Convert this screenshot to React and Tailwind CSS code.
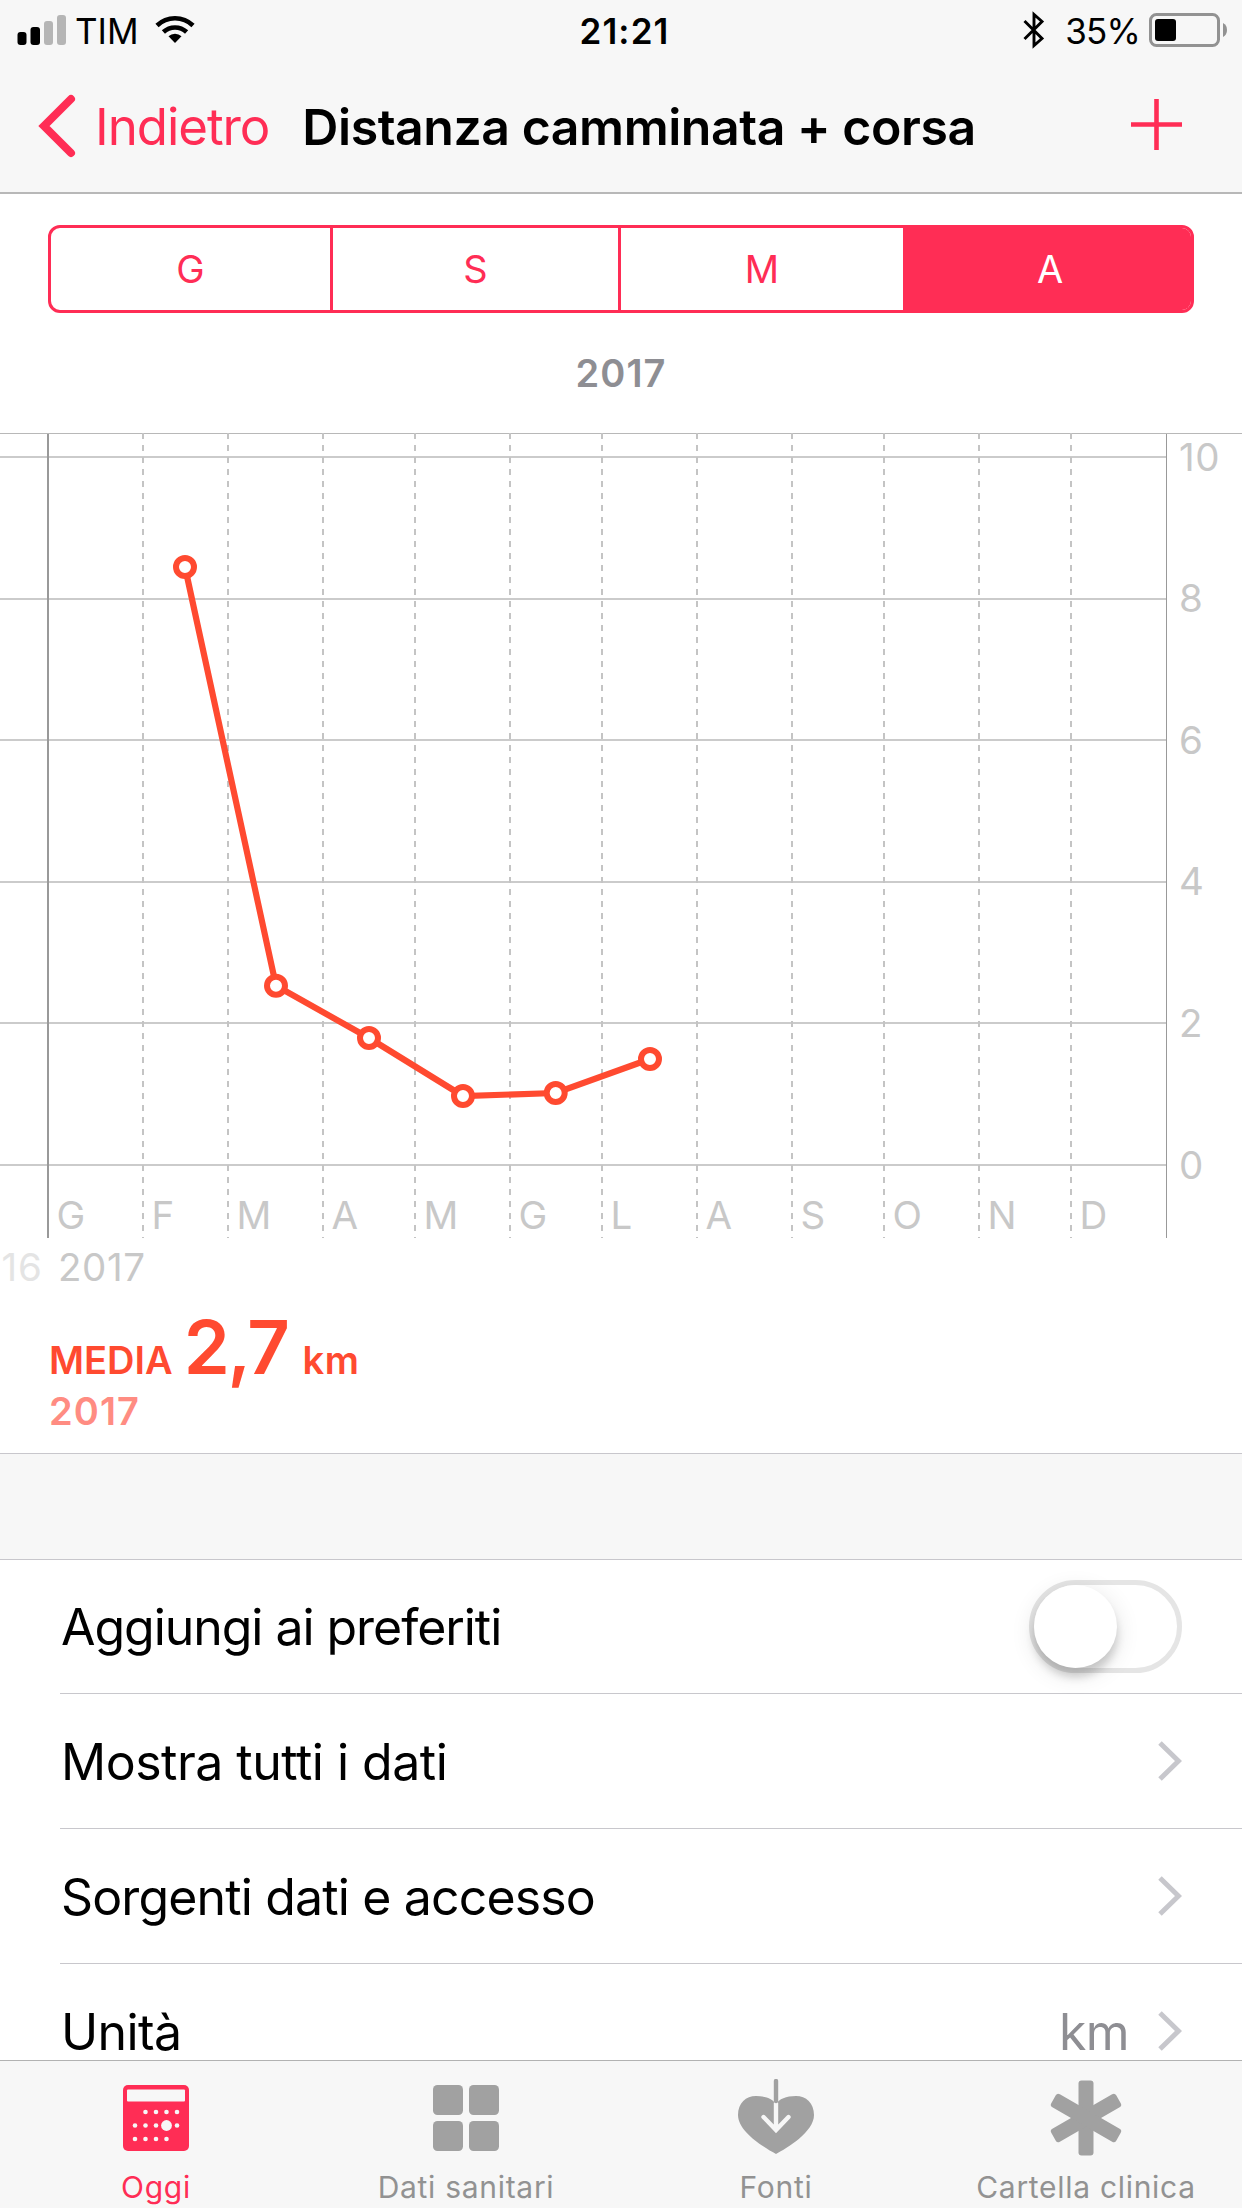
import { Fragment } from 'react'

const PINK = '#ff2d55'
const ORANGE = '#ff4a30'

const RANGES = [
  { label: 'G', style: 'w-[282px] border-r-3 border-[#ff2d55] text-[#ff2d55]' },
  { label: 'S', style: 'w-[288px] border-r-3 border-[#ff2d55] text-[#ff2d55]' },
  { label: 'M', style: 'w-[285px] border-r-3 border-[#ff2d55] text-[#ff2d55]' },
  { label: 'A', style: 'w-[285px] bg-[#ff2d55] pl-[3px] text-white' },
]

const MONTHS = [
  ['G', 48], ['F', 143], ['M', 228], ['A', 323], ['M', 415], ['G', 510],
  ['L', 602], ['A', 697], ['S', 792], ['O', 884], ['N', 979], ['D', 1071],
]

const TICKS = [10, 8, 6, 4, 2, 0]

// x, y inside the chart's own 1242x867 box
const POINTS = [[185, 134], [276, 552.7], [369, 605], [463, 663], [555.7, 660], [650, 626]]

function tickY(value) {
  return 24 + (10 - value) * 70.8
}

function StatusBar() {
  return (
    <div className="flex h-[60px] items-center justify-between pl-[17px] pr-[14px]">
      <div className="flex flex-1 items-center">
        <svg width="50" height="32" viewBox="0 0 50 32">
          <rect x="0.5" y="18" width="9" height="13" rx="3" />
          <rect x="13.5" y="13" width="9.5" height="18" rx="3" />
          <rect x="27" y="7" width="9" height="24" rx="3" fill="#b5b5b5" />
          <rect x="40" y="1" width="9" height="30" rx="3" fill="#b5b5b5" />
        </svg>
        <span className="ml-[8px] pt-[2px] text-[35px] leading-none">TIM</span>
        <svg className="ml-[16px]" width="40" height="30" viewBox="0 0 40 30" fill="none" stroke="#000">
          <path d="M2 10.5 A26 26 0 0 1 38 10.5" strokeWidth="4.6" />
          <path d="M8.4 17 A17 17 0 0 1 31.6 17" strokeWidth="4.6" />
          <path d="M20 28 L13.5 21.3 A9.5 9.5 0 0 1 26.5 21.3 Z" fill="#000" stroke="none" />
        </svg>
      </div>
      <span className="pl-[4px] pt-[2px] text-[35px] font-semibold leading-none tracking-[1.1px]">21:21</span>
      <div className="flex flex-1 items-center justify-end">
        <svg width="22" height="38" viewBox="0 0 22 38" fill="none" stroke="#000" strokeWidth="2.9">
          <path d="M1.5 10 L19 27.5 L11 34.5 V3.5 L19 10.5 L1.5 28" />
        </svg>
        <span className="ml-[20px] pt-[2px] text-[35px] leading-none tracking-[-0.8px]">35%</span>
        <svg className="ml-[9px]" width="79" height="34" viewBox="0 0 79 34">
          <rect x="1.5" y="1.5" width="68" height="31" rx="6" fill="none" stroke="#929292" strokeWidth="3" />
          <rect x="6" y="6" width="21" height="22" rx="3" />
          <path d="M74 10 Q78 12 78 17 Q78 22 74 24 Z" fill="#929292" />
        </svg>
      </div>
    </div>
  )
}

function NavBar() {
  return (
    <div className="flex h-[132px] items-center pl-[38px] pr-[60px]">
      <svg width="38" height="64" viewBox="0 0 38 64" fill="none" stroke={PINK} strokeWidth="8" strokeLinecap="round">
        <path d="M33 5 L6 32 L33 59" />
      </svg>
      <span className="ml-[19px] pt-[1px] text-[51px] leading-none tracking-[-1.05px] text-[#ff2d55]">Indietro</span>
      <h1 className="ml-[33px] pt-[1px] text-[50px] font-semibold leading-none tracking-[-0.46px]">
        Distanza camminata + corsa
      </h1>
      <svg className="mb-[3px] ml-auto" width="51" height="51" viewBox="0 0 51 51" stroke={PINK} strokeWidth="4.6">
        <path d="M25.5 0 V51 M0 25.5 H51" />
      </svg>
    </div>
  )
}

function RangePicker() {
  return (
    <div className="mx-[48px] mt-[31px] flex h-[88px] overflow-hidden rounded-[12px] border-3 border-[#ff2d55]">
      {RANGES.map(({ label, style }) => (
        <div key={label} className={`flex items-center justify-center text-[38px] leading-none ${style}`}>
          {label}
        </div>
      ))}
    </div>
  )
}

function Chart() {
  return (
    <svg className="block" width="1242" height="867" viewBox="0 0 1242 867" fontSize="38.5" fill="#c8c8c8">
      <path d="M0 0.5 H1242" stroke="#b8b8b8" />
      {TICKS.map(t => (
        <Fragment key={t}>
          <path d={`M0 ${Math.round(tickY(t))} H1166`} stroke="#cbcbcb" strokeWidth="2" />
          <text x="1179" y={tickY(t) + 13.5} letterSpacing="0.5">{t}</text>
        </Fragment>
      ))}
      {MONTHS.map(([m, x], i) => (
        <Fragment key={x}>
          {i > 0 && <path d={`M${x} 0 V805`} stroke="#c4c4c4" strokeWidth="2" strokeDasharray="6 6" />}
          <text x={x + 8.5} y="796">{m}</text>
        </Fragment>
      ))}
      <path d="M48 1 V805" stroke="#999" strokeWidth="2" />
      <path d="M1166.5 1 V805" stroke="#999" />
      <text x="1.5" y="848" fill="#e4e4e4" letterSpacing="0.8">16</text>
      <text x="58" y="848" letterSpacing="0.6">2017</text>
      <polyline points={POINTS.join(' ')} fill="none" stroke={ORANGE} strokeWidth="6.2" />
      {POINTS.map(([x, y]) => (
        <circle key={x} cx={x} cy={y} r="9" fill="#fff" stroke={ORANGE} strokeWidth="6" />
      ))}
    </svg>
  )
}

function Average() {
  return (
    <div className="h-[153px] pl-[49px] font-semibold leading-none text-[#ff4a30]">
      <div className="flex h-[92px] items-baseline pt-[10px]">
        <span className="text-[38px]">MEDIA</span>
        <span className="ml-[11px] text-[74px] tracking-[-2.3px]">2,7</span>
        <span className="ml-[15px] text-[38px] tracking-[0.6px]">km</span>
      </div>
      <div className="text-[38px] tracking-[1.1px] text-[#ff8c82]">2017</div>
    </div>
  )
}

function Chevron() {
  return (
    <svg width="24" height="40" viewBox="0 0 24 40" fill="none" stroke="#c7c7cc" strokeWidth="5">
      <path d="M2 2 L20.5 20 L2 38" />
    </svg>
  )
}

function Toggle() {
  return (
    <div className="h-[93px] w-[153px] rounded-full border-5 border-[#e5e5e5]">
      <div className="h-[83px] w-[83px] rounded-full bg-white shadow-[0_9px_9px_rgba(0,0,0,0.16),0_6px_24px_rgba(0,0,0,0.12)]" />
    </div>
  )
}

function Row({ label, className, children }) {
  return (
    <div className={`ml-[60px] flex items-center justify-between border-[#c8c7cc] pl-[1px] pr-[60px] ${className}`}>
      <span className="pt-[1px] text-[50px] leading-none">{label}</span>
      <div className="flex items-center tracking-normal">{children}</div>
    </div>
  )
}

function CalendarIcon() {
  const dots = [
    [22.5, 27], [33, 27], [43.5, 27], [54, 27],
    [12, 40.5], [22.5, 40.5], [33, 40.5], [54, 40.5],
    [12, 54], [22.5, 54], [33, 54], [43.5, 54],
  ]
  return (
    <svg width="66" height="66" viewBox="0 0 66 66" fill="#f7f7f7">
      <rect width="66" height="66" rx="5" fill={PINK} />
      <rect x="4" y="4.5" width="58" height="12" rx="1" />
      {dots.map(([x, y]) => <circle key={`${x}-${y}`} cx={x} cy={y} r="2.3" />)}
      <circle cx="43.5" cy="40.5" r="5.4" />
    </svg>
  )
}

function GridIcon() {
  return (
    <svg width="66" height="66" viewBox="0 0 66 66" fill="#a1a1a1">
      <rect width="30" height="30" rx="4.5" />
      <rect x="36" width="30" height="30" rx="4.5" />
      <rect y="36" width="30" height="30" rx="4.5" />
      <rect x="36" y="36" width="30" height="30" rx="4.5" />
    </svg>
  )
}

function HeartIcon() {
  return (
    <svg className="mb-[2px]" width="76" height="76" viewBox="0 0 76 76" fill="none" strokeLinecap="round">
      <path d="M38 75 C27 69 0 53 0 36 C0 24 8 17 18 17 C28 17 35 20 38 25 C41 20 48 17 58 17 C68 17 76 24 76 36 C76 53 49 69 38 75 Z" fill="#a1a1a1" />
      <path d="M38 24 V50 M25.5 38 L38 51 L50.5 38" stroke="#f7f7f7" strokeWidth="4.4" />
      <path d="M38 2 V22" stroke="#a1a1a1" strokeWidth="4.4" />
    </svg>
  )
}

function AsteriskIcon() {
  return (
    <svg width="76" height="76" viewBox="0 0 76 76" fill="#a1a1a1">
      {[0, 60, 120].map(deg => (
        <rect key={deg} x="30.5" y="0.5" width="15" height="75" rx="3" transform={`rotate(${deg} 38 38)`} />
      ))}
    </svg>
  )
}

const TABS = [
  { label: 'Oggi', icon: <CalendarIcon />, active: true },
  { label: 'Dati sanitari', icon: <GridIcon /> },
  { label: 'Fonti', icon: <HeartIcon /> },
  { label: 'Cartella clinica', icon: <AsteriskIcon /> },
]

function TabBar() {
  return (
    <div className="flex h-[148px] border-t border-[#b2b2b2] bg-[#f7f7f7] px-[1px]">
      {TABS.map(tab => (
        <div key={tab.label} className="flex flex-1 flex-col items-center pt-[15px]">
          <div className="flex h-[84px] items-center">{tab.icon}</div>
          <span
            className={`mt-[12px] whitespace-nowrap text-[30px] leading-none tracking-[0.7px] ${
              tab.active ? 'text-[#ff2d55]' : 'text-[#929292]'
            }`}
          >
            {tab.label}
          </span>
        </div>
      ))}
    </div>
  )
}

export default function App() {
  return (
    <div className="flex h-[2208px] w-[1242px] flex-col overflow-hidden bg-white font-['Inter','Liberation_Sans',sans-serif] text-black">
      <header className="h-[194px] shrink-0 border-b-2 border-[#b8b8b8] bg-[#f7f7f7]">
        <StatusBar />
        <NavBar />
      </header>
      <main className="h-[1866px] shrink-0">
        <RangePicker />
        <div className="flex h-[120px] items-center justify-center text-[38px] font-semibold leading-none tracking-[1.1px] text-[#8e8e93]">
          2017
        </div>
        <Chart />
        <Average />
        <div className="h-[107px] border-y border-[#c8c7cc] bg-[#f7f7f7]" />
        <Row label="Aggiungi ai preferiti" className="h-[134px] border-b tracking-[-1.05px]"><Toggle /></Row>
        <Row label="Mostra tutti i dati" className="h-[135px] border-b tracking-[-0.5px]"><Chevron /></Row>
        <Row label="Sorgenti dati e accesso" className="h-[135px] border-b tracking-[-0.85px]"><Chevron /></Row>
        <Row label="Unità" className="h-[96px] pt-[38px] tracking-[-0.6px]">
          <span className="mr-[29px] pt-[1px] text-[50px] leading-none tracking-[-0.6px] text-[#8e8e93]">km</span>
          <Chevron />
        </Row>
      </main>
      <TabBar />
    </div>
  )
}
